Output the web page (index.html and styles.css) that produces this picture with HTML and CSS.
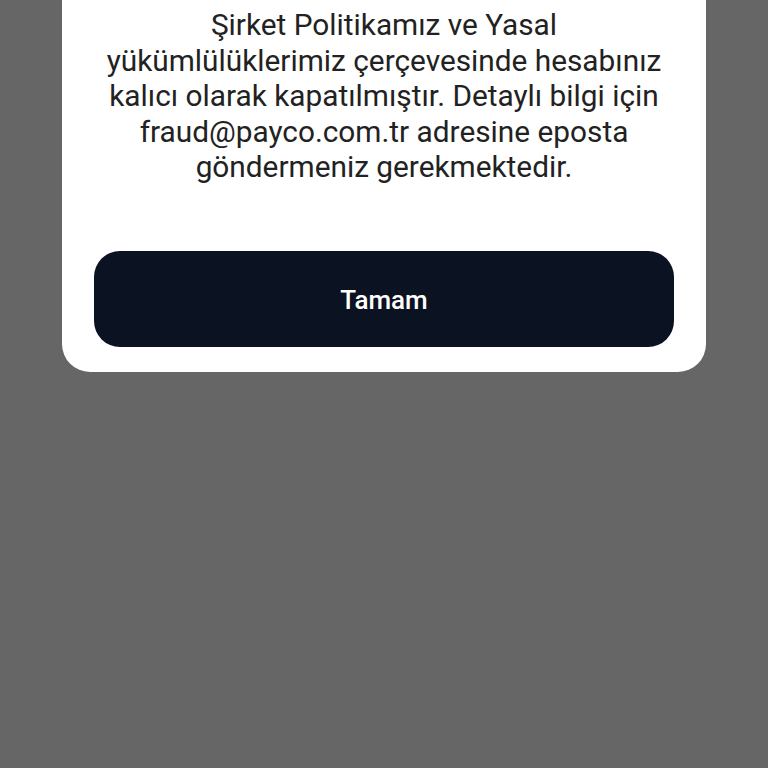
FILE: index.html
```html
<!DOCTYPE html>
<html lang="tr">
<head>
<meta charset="utf-8">
<link rel="stylesheet" href="styles.css">
</head>
<body>
<div class="screen">
  <div class="card">
    <p class="message">Şirket Politikamız ve Yasal<br>yükümlülüklerimiz çerçevesinde hesabınız<br>kalıcı olarak kapatılmıştır. Detaylı bilgi için<br>fraud@payco.com.tr adresine eposta<br>göndermeniz gerekmektedir.</p>
    <button class="btn">Tamam</button>
  </div>
</div>
</body>
</html>
```
FILE: styles.css
```css
html, body {
  margin: 0;
  padding: 0;
  background: #666666;
}
.screen {
  width: 768px;
  height: 768px;
  display: flex;
  flex-direction: column;
  align-items: center;
}
.card {
  width: 644px;
  box-sizing: border-box;
  background: #ffffff;
  border-radius: 0 0 28px 28px;
  padding: 7px 32px 25px;
  display: flex;
  flex-direction: column;
  align-items: stretch;
}
.message {
  margin: 0 0 66px;
  font-family: Roboto, "Noto Sans", sans-serif;
  font-size: 29.8px;
  line-height: 35.5px;
  color: #222222;
  text-align: center;
  white-space: nowrap;
}
.btn {
  height: 96px;
  border: none;
  border-radius: 26px;
  background: #0b1221;
  color: #ffffff;
  font-family: Roboto, "Noto Sans", sans-serif;
  font-weight: 500;
  font-size: 26px;
  padding: 3px 0 0;
}
```
